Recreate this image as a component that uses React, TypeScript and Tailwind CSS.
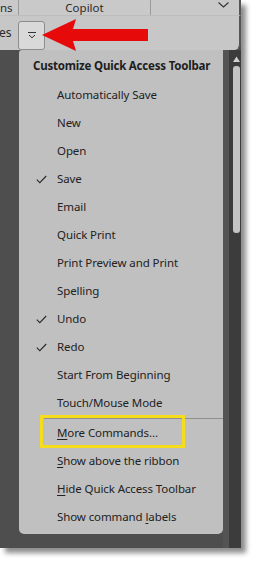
import React from "react";

const items: { label: React.ReactNode; checked?: boolean }[] = [
  { label: "Automatically Save" },
  { label: "New" },
  { label: "Open" },
  { label: "Save", checked: true },
  { label: "Email" },
  { label: "Quick Print" },
  { label: "Print Preview and Print" },
  { label: "Spelling" },
  { label: "Undo", checked: true },
  { label: "Redo", checked: true },
  { label: "Start From Beginning" },
  { label: "Touch/Mouse Mode" },
];

const bottomItems: React.ReactNode[] = [
  <>
    <u className="underline-offset-2">S</u>how above the ribbon
  </>,
  <>
    <u className="underline-offset-2">H</u>ide Quick Access Toolbar
  </>,
  <>
    Show command <u className="underline-offset-2">l</u>abels
  </>,
];

const Check = () => (
  <svg width="11" height="9" viewBox="0 0 11 9" className="absolute left-[17px] top-[10px]">
    <path d="M0.8 4.6 L3.8 7.6 L10.2 1" fill="none" stroke="#2a2a2a" strokeWidth="1.1" />
  </svg>
);

const MenuRow = ({ children, checked }: { children: React.ReactNode; checked?: boolean }) => (
  <div className="relative h-[28px] flex items-center pl-[38px] text-[11.5px] tracking-[-0.1px] whitespace-nowrap text-[#222]">
    {checked && <Check />}
    <span>{children}</span>
  </div>
);

export default function App() {
  return (
    <div className="w-[256px] h-[565px] bg-white overflow-hidden" style={{ fontFamily: '"Noto Sans", "Open Sans", sans-serif' }}>
      <div className="relative w-[241px] h-[548px] bg-[#4e4e4e] shadow-[5px_5px_5px_rgba(0,0,0,0.45)] flex flex-col">
        {/* ribbon tab strip */}
        <div className="h-[15px] bg-[#c9c9c9] border-r-2 border-[#555] flex items-center text-[11.5px] text-[#2a2a2a] leading-[14px]">
          <span className="w-[18px]">ns</span>
          <div className="w-px h-full bg-[#9a9a9a]" />
          <span className="w-[131px] text-center">Copilot</span>
          <div className="w-px h-full bg-[#9a9a9a]" />
          <div className="flex-1 flex justify-end pr-[10px] -mt-[6px]">
            <svg width="11" height="6" viewBox="0 0 11 6">
              <path d="M0.5 0.5 L5.5 5 L10.5 0.5" fill="none" stroke="#333" strokeWidth="1.1" />
            </svg>
          </div>
        </div>
        {/* quick access toolbar */}
        <div className="relative h-[35px] bg-[#c7c7c7] border-r-2 border-t border-[#555] border-t-[#bdbdbd] rounded-br-[6px] flex items-center text-[12px] text-[#2a2a2a]">
          <span className="w-[19px] -ml-[1px]">es</span>
          <div className="w-[27px] h-[29px] mt-[4px] rounded-[3px] border border-[#8c8c8c] bg-[#d9d9d9] flex items-center justify-center">
            <svg width="10" height="7" viewBox="0 0 10 7">
              <path d="M1 0.5 H9" stroke="#333" strokeWidth="1" />
              <path d="M2 3 L5 5.8 L8 3" fill="none" stroke="#333" strokeWidth="1" />
            </svg>
          </div>
          <svg width="110" height="36" viewBox="0 0 110 36" className="absolute left-[40px] top-[1px]">
            <polygon points="2,18 36,2 33,12 108,12 108,24 33,24 36,34" fill="#e60a0a" />
          </svg>
        </div>
        {/* workspace with menu */}
        <div className="flex-1 flex">
          <div className="w-[19px]" />
          <div className="w-[204px] h-[484px] bg-[#c0c0c0] rounded-b-[5px] rounded-tl-[3px] pt-[3px] flex flex-col">
            <div className="h-[28px] pb-[3px] flex items-center pl-[14px] text-[11.5px] font-bold tracking-[-0.2px] whitespace-nowrap text-[#1e1e1e]">
              Customize Quick Access Toolbar
            </div>
            {items.map((it, i) => (
              <MenuRow key={i} checked={it.checked}>
                {it.label}
              </MenuRow>
            ))}
            <div className="h-[2px] flex items-end pl-[25px]">
              <div className="h-px w-full bg-[#8f8f8f]" />
            </div>
            <div className="relative">
              <div className="absolute left-[21px] top-[-4px] w-[145px] h-[33px] border-[3px] border-[#f5dc1c]" />
              <MenuRow>
                <u className="underline-offset-2">M</u>ore Commands...
              </MenuRow>
            </div>
            {bottomItems.map((b, i) => (
              <MenuRow key={i}>{b}</MenuRow>
            ))}
          </div>
          <div className="w-[6px] bg-[#545454]" />
          <div className="flex-1 bg-[#3c3c3c] flex flex-col items-center pl-[3px] pt-[6px]">
            <svg width="7" height="6" viewBox="0 0 7 6">
              <polygon points="3.5,0.5 7,6 0,6" fill="#d0d0d0" />
            </svg>
            <div className="mt-[4px] w-[7px] h-[167px] bg-[#c4c4c4] rounded-[3px]" />
          </div>
        </div>
      </div>
    </div>
  );
}
